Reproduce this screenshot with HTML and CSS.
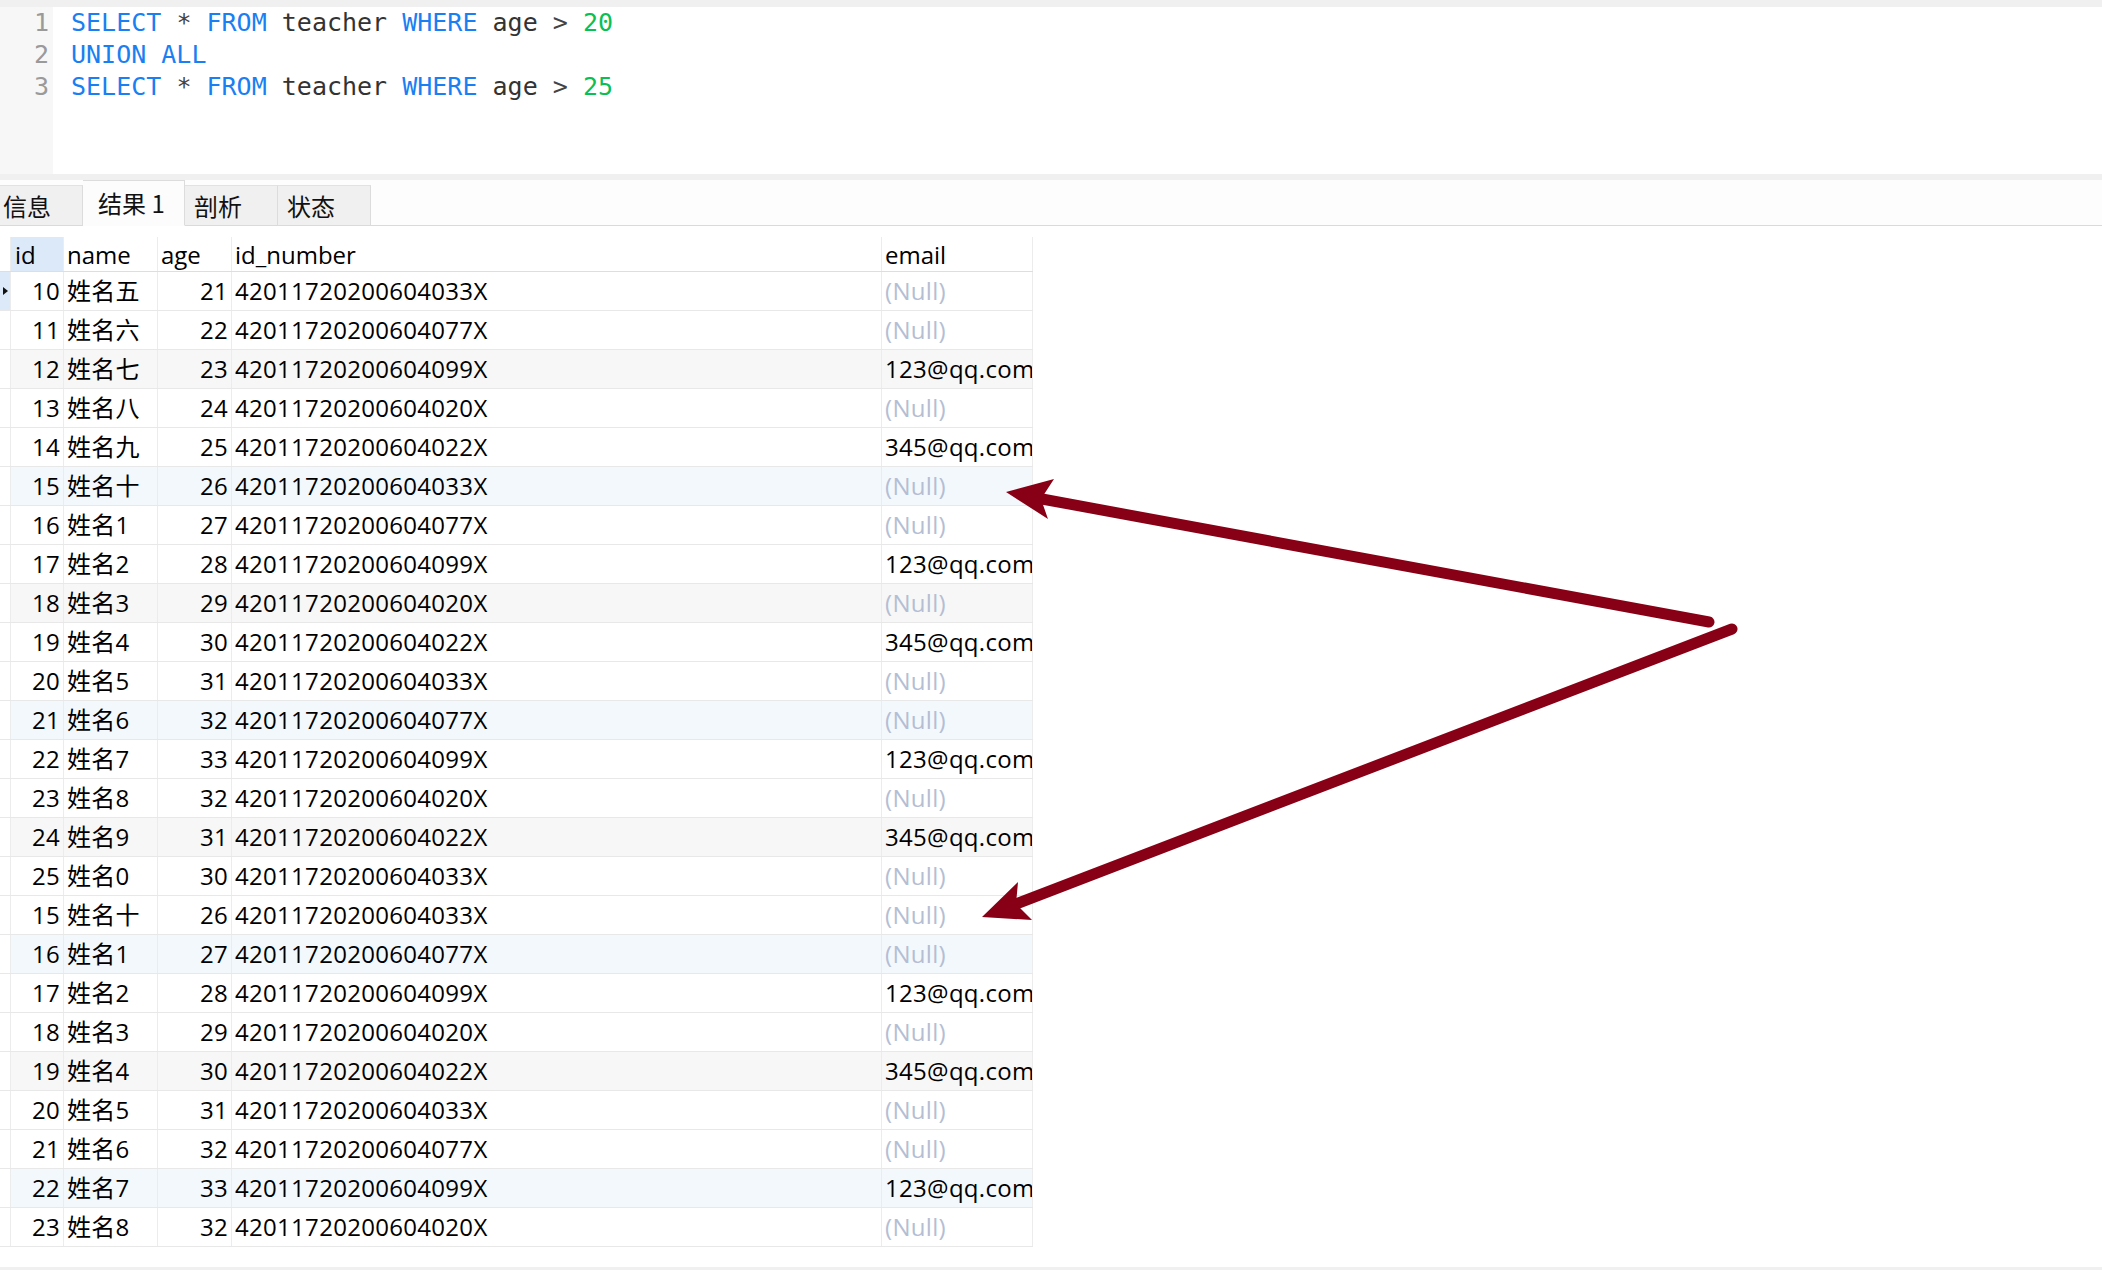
FILE: index.html
```html
<!DOCTYPE html>
<html lang="zh">
<head>
<meta charset="utf-8">
<title>Query</title>
<link rel="stylesheet" href="styles.css">
</head>
<body>
<div class="app">
  <div class="band-top"></div>
  <div class="editor">
    <div class="gutter"><div>1</div><div>2</div><div>3</div></div>
    <div class="code">
      <div class="ln"><span class="kw">SELECT</span> <span class="op">*</span> <span class="kw">FROM</span> <span class="id">teacher</span> <span class="kw">WHERE</span> <span class="id">age</span> <span class="op">&gt;</span> <span class="num">20</span></div>
      <div class="ln"><span class="kw">UNION ALL</span></div>
      <div class="ln"><span class="kw">SELECT</span> <span class="op">*</span> <span class="kw">FROM</span> <span class="id">teacher</span> <span class="kw">WHERE</span> <span class="id">age</span> <span class="op">&gt;</span> <span class="num">25</span></div>
    </div>
  </div>
  <div class="band-mid"></div>
  <div class="tabs">
    <div class="tab first">信息</div>
    <div class="tab active">结果 1</div>
    <div class="tab">剖析</div>
    <div class="tab">状态</div>
  </div>
  <div class="grid-area">
    <div class="grid">
      <div class="row head">
        <div class="c ind"></div>
        <div class="c sel">id</div>
        <div class="c">name</div>
        <div class="c">age</div>
        <div class="c">id_number</div>
        <div class="c">email</div>
      </div>
      <div class="row"><div class="c ind cur"><span class="tri"></span></div><div class="c r">10</div><div class="c">姓名五</div><div class="c r">21</div><div class="c">42011720200604033X</div><div class="c null">(Null)</div></div>
      <div class="row"><div class="c ind"></div><div class="c r">11</div><div class="c">姓名六</div><div class="c r">22</div><div class="c">42011720200604077X</div><div class="c null">(Null)</div></div>
      <div class="row alt"><div class="c ind"></div><div class="c r">12</div><div class="c">姓名七</div><div class="c r">23</div><div class="c">42011720200604099X</div><div class="c">123@qq.com</div></div>
      <div class="row"><div class="c ind"></div><div class="c r">13</div><div class="c">姓名八</div><div class="c r">24</div><div class="c">42011720200604020X</div><div class="c null">(Null)</div></div>
      <div class="row"><div class="c ind"></div><div class="c r">14</div><div class="c">姓名九</div><div class="c r">25</div><div class="c">42011720200604022X</div><div class="c">345@qq.com</div></div>
      <div class="row hl"><div class="c ind"></div><div class="c r">15</div><div class="c">姓名十</div><div class="c r">26</div><div class="c">42011720200604033X</div><div class="c null">(Null)</div></div>
      <div class="row"><div class="c ind"></div><div class="c r">16</div><div class="c">姓名1</div><div class="c r">27</div><div class="c">42011720200604077X</div><div class="c null">(Null)</div></div>
      <div class="row"><div class="c ind"></div><div class="c r">17</div><div class="c">姓名2</div><div class="c r">28</div><div class="c">42011720200604099X</div><div class="c">123@qq.com</div></div>
      <div class="row alt"><div class="c ind"></div><div class="c r">18</div><div class="c">姓名3</div><div class="c r">29</div><div class="c">42011720200604020X</div><div class="c null">(Null)</div></div>
      <div class="row"><div class="c ind"></div><div class="c r">19</div><div class="c">姓名4</div><div class="c r">30</div><div class="c">42011720200604022X</div><div class="c">345@qq.com</div></div>
      <div class="row"><div class="c ind"></div><div class="c r">20</div><div class="c">姓名5</div><div class="c r">31</div><div class="c">42011720200604033X</div><div class="c null">(Null)</div></div>
      <div class="row hl"><div class="c ind"></div><div class="c r">21</div><div class="c">姓名6</div><div class="c r">32</div><div class="c">42011720200604077X</div><div class="c null">(Null)</div></div>
      <div class="row"><div class="c ind"></div><div class="c r">22</div><div class="c">姓名7</div><div class="c r">33</div><div class="c">42011720200604099X</div><div class="c">123@qq.com</div></div>
      <div class="row"><div class="c ind"></div><div class="c r">23</div><div class="c">姓名8</div><div class="c r">32</div><div class="c">42011720200604020X</div><div class="c null">(Null)</div></div>
      <div class="row alt"><div class="c ind"></div><div class="c r">24</div><div class="c">姓名9</div><div class="c r">31</div><div class="c">42011720200604022X</div><div class="c">345@qq.com</div></div>
      <div class="row"><div class="c ind"></div><div class="c r">25</div><div class="c">姓名0</div><div class="c r">30</div><div class="c">42011720200604033X</div><div class="c null">(Null)</div></div>
      <div class="row"><div class="c ind"></div><div class="c r">15</div><div class="c">姓名十</div><div class="c r">26</div><div class="c">42011720200604033X</div><div class="c null">(Null)</div></div>
      <div class="row hl"><div class="c ind"></div><div class="c r">16</div><div class="c">姓名1</div><div class="c r">27</div><div class="c">42011720200604077X</div><div class="c null">(Null)</div></div>
      <div class="row"><div class="c ind"></div><div class="c r">17</div><div class="c">姓名2</div><div class="c r">28</div><div class="c">42011720200604099X</div><div class="c">123@qq.com</div></div>
      <div class="row"><div class="c ind"></div><div class="c r">18</div><div class="c">姓名3</div><div class="c r">29</div><div class="c">42011720200604020X</div><div class="c null">(Null)</div></div>
      <div class="row alt"><div class="c ind"></div><div class="c r">19</div><div class="c">姓名4</div><div class="c r">30</div><div class="c">42011720200604022X</div><div class="c">345@qq.com</div></div>
      <div class="row"><div class="c ind"></div><div class="c r">20</div><div class="c">姓名5</div><div class="c r">31</div><div class="c">42011720200604033X</div><div class="c null">(Null)</div></div>
      <div class="row"><div class="c ind"></div><div class="c r">21</div><div class="c">姓名6</div><div class="c r">32</div><div class="c">42011720200604077X</div><div class="c null">(Null)</div></div>
      <div class="row hl"><div class="c ind"></div><div class="c r">22</div><div class="c">姓名7</div><div class="c r">33</div><div class="c">42011720200604099X</div><div class="c">123@qq.com</div></div>
      <div class="row"><div class="c ind"></div><div class="c r">23</div><div class="c">姓名8</div><div class="c r">32</div><div class="c">42011720200604020X</div><div class="c null">(Null)</div></div>
    </div>
  </div>
  <div class="band-bottom"></div>
  <svg class="annot" width="2102" height="1270" viewBox="0 0 2102 1270">
    <g fill="#880015" stroke="#880015">
      <line x1="1709" y1="622" x2="1042" y2="499" stroke-width="11" stroke-linecap="round"/>
      <polygon stroke="none" points="1006,492 1054,479 1041,499 1048,519"/>
      <line x1="1732" y1="629" x2="1016" y2="904" stroke-width="11" stroke-linecap="round"/>
      <polygon stroke="none" points="982,917 1018,882 1016,904 1032,920"/>
    </g>
  </svg>
</div>
</body>
</html>
```

FILE: styles.css
```css
* { box-sizing: border-box; }
html, body { margin: 0; padding: 0; background: #ffffff; }
body { width: 2102px; height: 1270px; overflow: hidden; }

.app {
  position: relative;
  width: 2102px;
  height: 1270px;
  display: flex;
  flex-direction: column;
  font-family: "Open Sans", "Noto Sans CJK SC", sans-serif;
  color: #000;
}

.band-top { height: 7px; background: #f0f0f0; flex: none; }
.band-mid { height: 6px; background: #f0f0f0; flex: none; }
.band-bottom { height: 3px; background: #f0f0f0; flex: none; }

.editor {
  height: 167px;
  flex: none;
  display: flex;
  background: #ffffff;
  font-family: "DejaVu Sans Mono", "Liberation Mono", monospace;
  font-size: 25px;
  line-height: 32px;
}
.gutter {
  width: 53px;
  background: #f7f7f7;
  color: #9a9a9a;
  text-align: right;
  padding-right: 4px;
}
.code { padding-left: 18px; }
.ln { white-space: pre; height: 32px; }
.kw { color: #1a7ff2; }
.num { color: #0bbf55; }
.id { color: #333333; }
.op { color: #444444; }

.tabs {
  height: 46px;
  flex: none;
  display: flex;
  align-items: flex-end;
  background: #fdfdfd;
  border-bottom: 1px solid #dadada;
  font-family: "Noto Sans CJK SC", "Open Sans", sans-serif;
  font-size: 24px;
}
.tab {
  height: 41px;
  line-height: 40px;
  background: #f0f0f0;
  border-right: 1px solid #dcdcdc;
  border-top: 1px solid #e2e2e2;
  width: 93px;
  padding-left: 9px;
  color: #111;
  margin-bottom: -1px;
  border-bottom: 1px solid #dadada;
}
.tab.first { width: 83px; padding-left: 3px; }
.tab.active {
  height: 46px;
  line-height: 44px;
  background: #fcfcfc;
  width: 102px;
  padding-left: 15px;
  border-bottom: 1px solid #fcfcfc;
  border-top: 1px solid #dcdcdc;
}

.grid-area {
  flex: 1;
  padding-top: 11px;
  background: #ffffff;
}
.grid { width: 1033px; }
.row {
  display: grid;
  grid-template-columns: 11px 53px 94px 74px 650px 151px;
  height: 39px;
  border-bottom: 1px solid #e8e8e8;
  font-size: 24px;
  letter-spacing: 0.3px;
  line-height: 38px;
}
.row.head { height: 35px; line-height: 35px; border-bottom-color: #dedede; letter-spacing: 0; }
.row.alt .c:not(.ind) { background: #f7f7f7; }
.row.hl .c:not(.ind) { background: #f3f8fd; }
.c {
  border-right: 1px solid #ececec;
  padding: 0 3px;
  white-space: nowrap;
  overflow: hidden;
}
.c.r { text-align: right; padding-right: 3px; }
.c.ind { padding: 0; position: relative; }
.c.sel { background: #dbe9f8; padding-left: 4px; }
.c.cur { background: #dbe9f8; }
.c.null { color: #b4bed3; }
.tri {
  position: absolute;
  left: 3px;
  top: 15px;
  width: 0;
  height: 0;
  border-top: 4.5px solid transparent;
  border-bottom: 4.5px solid transparent;
  border-left: 5px solid #111;
}

.annot {
  position: absolute;
  left: 0;
  top: 0;
  pointer-events: none;
}
```
